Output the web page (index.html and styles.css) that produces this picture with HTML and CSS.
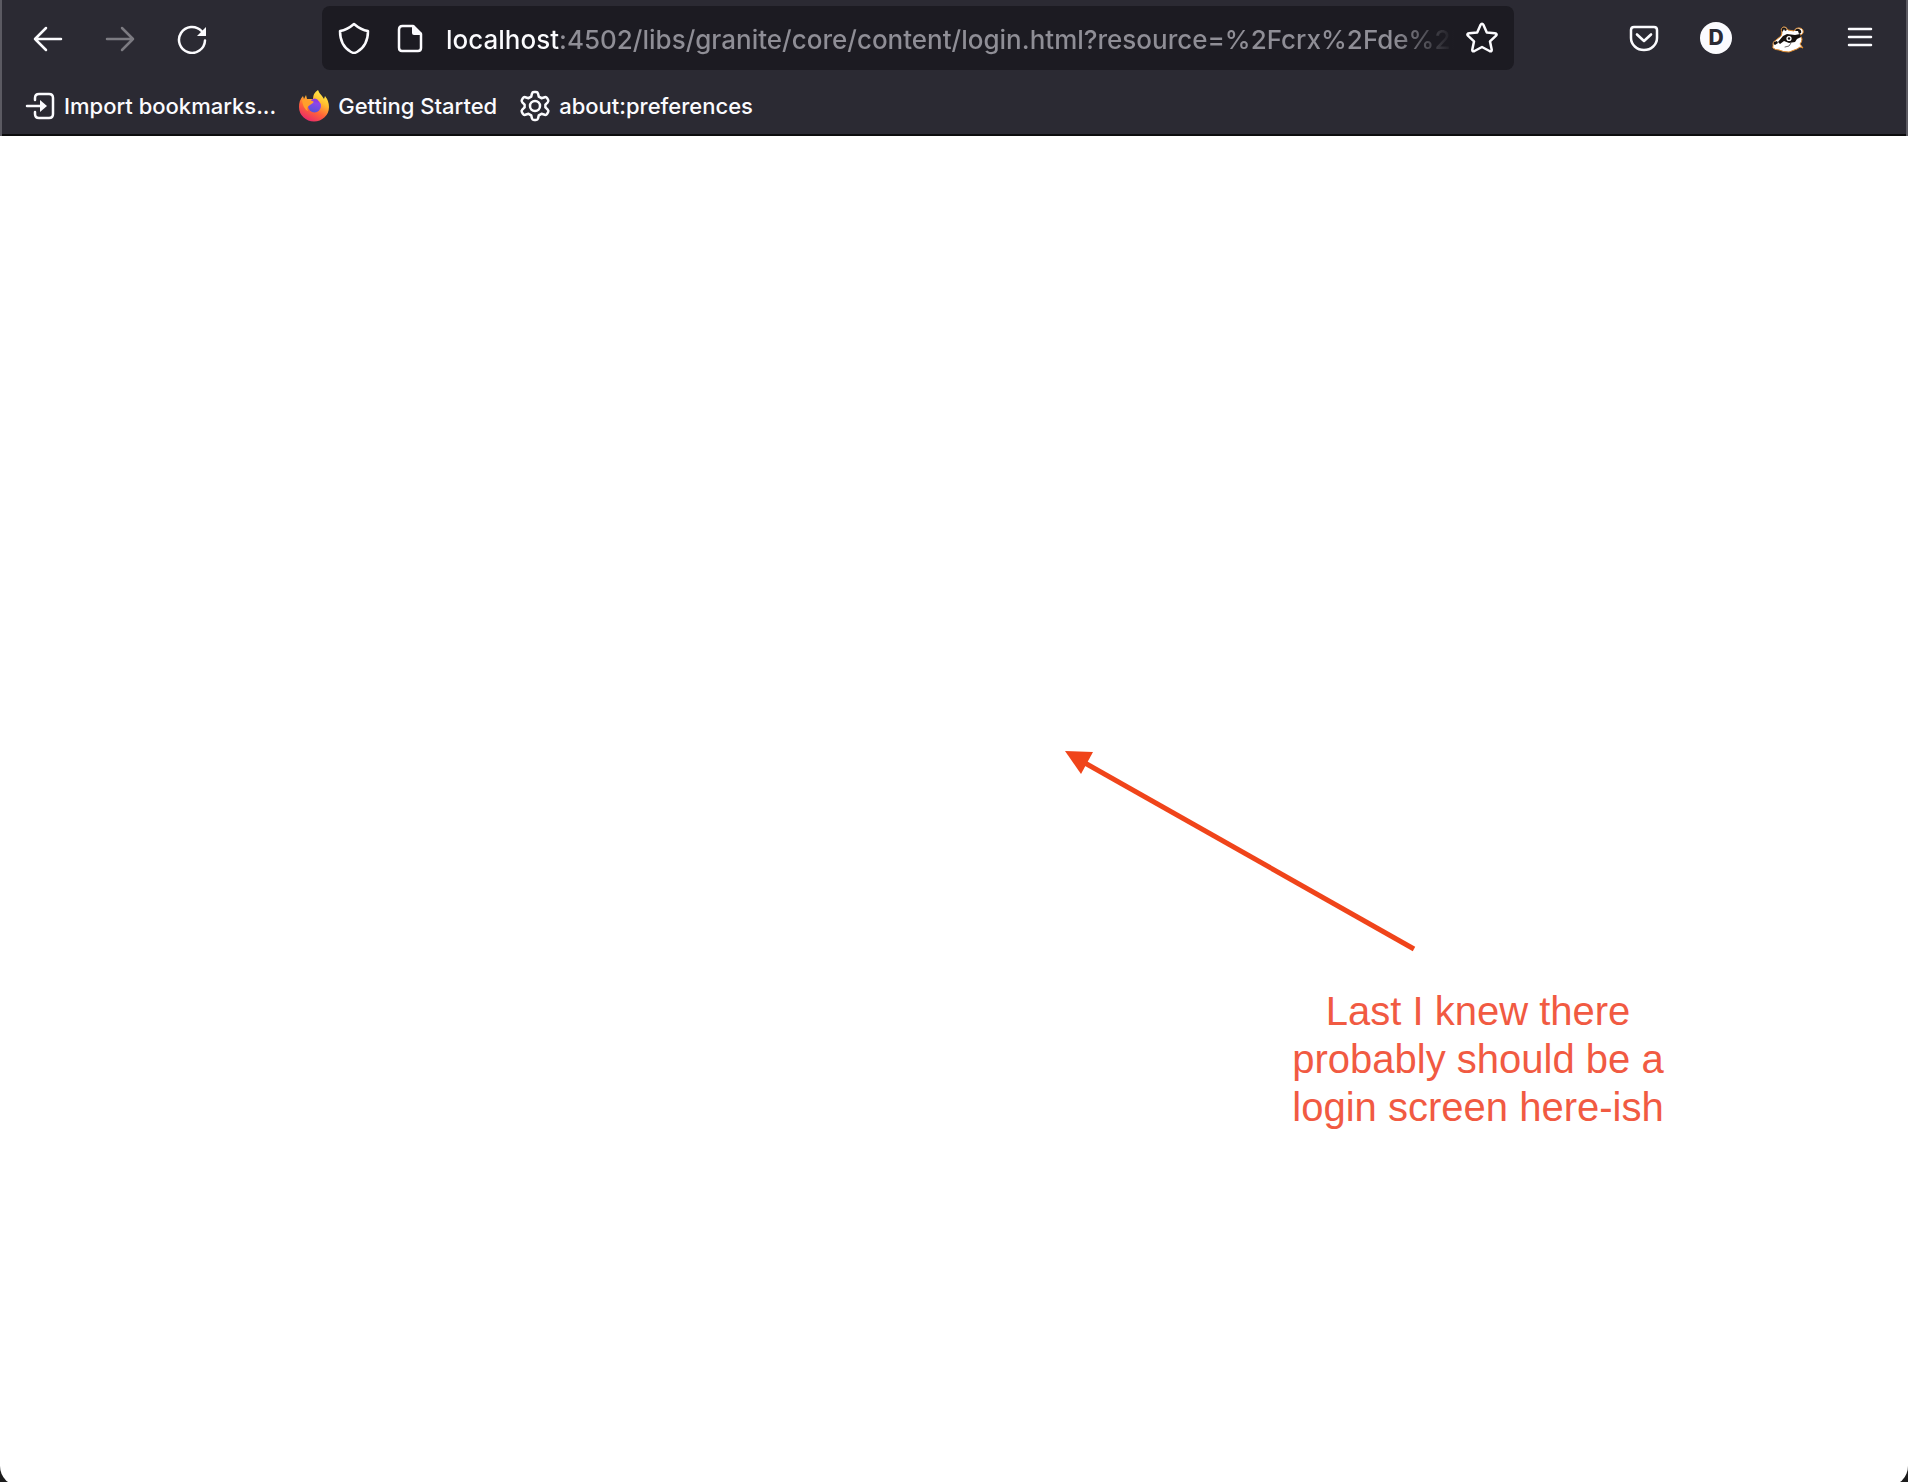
FILE: index.html
```html
<!DOCTYPE html>
<html lang="en">
<head>
<meta charset="utf-8">
<title>localhost:4502</title>
<link rel="stylesheet" href="styles.css">
</head>
<body>
<div class="window">
  <header class="chrome">
    <nav class="toolbar" aria-label="Navigation">
      <button class="tool" aria-label="Back"><svg class="icon" viewBox="0 0 32 32"><path d="M29 17H3M14 6 3 17l11 11"/></svg></button>
      <button class="tool" aria-label="Forward" disabled><svg class="icon" viewBox="0 0 32 32"><path d="M3 17h26M18 6l11 11-11 11"/></svg></button>
      <button class="tool" aria-label="Reload"><svg class="icon" viewBox="0 0 32 32"><path d="M29 18.500a13 13 0 1 1-3.500-9.500"/><path class="solid" d="M30 5v8.500q0 .5-.5.500H21z"/></svg></button>
      <div class="urlbar">
        <svg class="icon" viewBox="0 0 32 32"><path d="M16 2q-7 6-14 7c0 9 4 17 11 21q3 1.800 6 0c7-4 11-12 11-21Q23 8 16 2z"/></svg>
        <svg class="icon" viewBox="0 0 32 32"><path d="M19 4H8.500Q5 4 5 7.500v18Q5 29 8 29h16q3 0 3-3V12"/><path class="solid" d="M18 3h2l8 8v2h-8q-2 0-2-2z"/></svg>
        <input class="address" type="text" aria-label="Address" value="localhost:4502/libs/granite/core/content/login.html?resource=%2Fcrx%2Fde%2F">
        <button class="bookmark" aria-label="Bookmark this page"><svg class="icon" viewBox="0 0 32 32"><path d="M14.400 3.200q1.600-2.800 3.200 0l3.200 7.200 8 .8q3 .5 1 2.700l-5.800 5.500 1.700 8.100q.3 2.700-2.200 1.500L16 25l-7.500 4q-2.500 1.200-2.200-1.500L8 19.400l-5.800-5.500q-2-2.200 1-2.700l8-.8z"/></svg></button>
      </div>
      <button class="tool" aria-label="Save to Pocket"><svg class="icon" viewBox="0 0 32 32"><path d="M6 5h20q3 0 3 3v8a13 12 0 0 1-26 0V8q0-3 3-3z"/><path d="m9 12.500 7 6.500 7-6.500" stroke-width="2.600"/></svg></button>
      <button class="tool" aria-label="Account"><span class="avatar">D</span></button>
      <button class="tool" aria-label="Privacy Badger"><svg class="icon badger" viewBox="0 0 32 32">
        <path fill="#fff" stroke="#e08a2c" stroke-width="1" d="M1 23q-1-3 3-5l5-4 1-3q-2-4 1-6 3-1 5 3l6 1q2-4 6-3 4 1 3 5-1 2-3 2l2 4q0 3-2 5l3 4-3-1-3 2-8 3q-6 0-10-2-4 0-6-2z"/>
        <path fill="#17120f" d="M10 10q-1-4 1.500-4.500Q14 5 15 8l-2 1-1-2-1 2zM23 9q1-3 4-2 3 1 2 4l-2 1-1-3zM2 20l3-1 1 2-3 2q-2-1-1-3zM6 20l5-6 4-2 8 1 5-1 1 3-4 2-2 3-6 1-5-2-4 3z"/>
        <circle cx="17" cy="16.500" r="2.600" fill="#fff"/><circle cx="17" cy="16.500" r="1.200" fill="#17120f"/>
        <path stroke="#6c6867" stroke-width="1" d="m13 25 4-1 2-3"/>
      </svg></button>
      <button class="tool" aria-label="Open menu"><svg class="icon" viewBox="0 0 32 32"><path d="M5 7h22M5 15h22M5 23h22"/></svg></button>
    </nav>
    <nav class="bookmarks" aria-label="Bookmarks">
      <a class="mark" href="#import"><svg class="icon" viewBox="0 0 32 32"><path d="M11 10V8q0-4 4-4h10q4 0 4 4v16q0 4-4 4H15q-4 0-4-4v-2M3 16h16"/><path class="solid" d="m16 10 7 6-7 6z"/></svg>Import bookmarks...</a>
      <a class="mark" href="#start"><svg class="icon firefox" viewBox="0 0 32 32">
        <defs>
          <linearGradient id="flame" x1=".8" y1="0" x2=".3" y2="1"><stop offset="0" stop-color="#fff44f"/><stop offset=".35" stop-color="#ffbd2e"/><stop offset=".65" stop-color="#ff6538"/><stop offset="1" stop-color="#e8266c"/></linearGradient>
          <linearGradient id="globe" x1=".7" y1="0" x2=".4" y2="1"><stop offset="0" stop-color="#a542ed"/><stop offset="1" stop-color="#5353d9"/></linearGradient>
        </defs>
        <path fill="url(#flame)" d="M20 0q1 3 4 6l2 3 1-3q4 5 4 11a15 14.500 0 0 1-30 0Q1 10 5 6l1 3 2-4 1 4 6 0Q15 3 20 0z"/>
        <circle cx="16.500" cy="16" r="6.500" fill="url(#globe)"/>
        <path fill="#ffa02b" d="M4 10q6-2 9 1 2-1 4-1-2 4-5 5-4 2-2 6-5-2-6-11z"/>
        <path fill="#8f3be0" d="M13 10q4-3 7 0l1 3-5-1z"/>
      </svg>Getting Started</a>
      <a class="mark" href="#preferences"><svg class="icon" viewBox="0 0 32 32"><path d="M13 3.500Q13.400 2 15 2h2q1.600 0 2 1.500l.8 3.100 2.700 1.600 3.200-1q1.600-.4 2.400 1l1 1.700q.8 1.400-.4 2.500l-2.300 2.200v2.800l2.300 2.200q1.200 1.100.4 2.500l-1 1.700q-.8 1.400-2.400 1l-3.200-1-2.700 1.600-.8 3.100Q18.600 30 17 30h-2q-1.600 0-2-1.500l-.8-3.100-2.700-1.600-3.200 1q-1.600.4-2.400-1l-1-1.700q-.8-1.400.4-2.500l2.300-2.200v-2.800l-2.300-2.200q-1.200-1.100-.4-2.500l1-1.700q.8-1.400 2.400-1l3.200 1 2.700-1.600z"/><circle cx="16" cy="16" r="5"/></svg>about:preferences</a>
    </nav>
  </header>
  <main class="page">
    <div class="note">
      <svg class="arrow" viewBox="0 0 352 202"><path d="M20 12 349 198" stroke="#f0441a" stroke-width="5"/><path fill="#f0441a" d="M0 0 28 1 16 23z"/></svg>
      <p class="caption">Last I knew there probably should be a login screen here-ish</p>
    </div>
  </main>
</div>
</body>
</html>
```
FILE: styles.css
```css
* { box-sizing: border-box; }

body {
  margin: 0;
  height: 100vh;
  overflow: hidden;
  background: #1c1c1c;
  font-family: Inter, "Liberation Sans", sans-serif;
}

/* The rounded window runs slightly past the bottom of the viewport. */
.window {
  display: flex;
  flex-direction: column;
  height: calc(100vh + 4px);
  border-radius: 0 0 20px 20px;
  overflow: hidden;
  background: #fff;
}

.chrome {
  background: #2b2a33;
  border: solid #5b5a62;
  border-width: 0 2px;
  box-shadow: inset 0 -2px #0c0c0d;
  color: #fbfbfe;
}

.toolbar {
  display: flex;
  align-items: center;
  gap: 8px;
  padding: 6px 14px;
}

button {
  display: grid;
  place-items: center;
  padding: 0;
  border: 0;
  background: none;
  color: inherit;
  font: inherit;
}

.tool {
  flex: none;
  width: 64px;
  height: 64px;
  border-radius: 8px;
}

.tool:disabled { color: #7c7b82; }

.icon {
  flex: none;
  width: 32px;
  height: 32px;
  fill: none;
  stroke: currentColor;
  stroke-width: 2.5;
  stroke-linecap: round;
  stroke-linejoin: round;
}

.icon .solid { fill: currentColor; stroke: none; }

.badger,
.firefox { stroke: none; }

.urlbar {
  flex: 1;
  display: flex;
  align-items: center;
  gap: 24px;
  min-width: 0;
  height: 64px;
  margin: 0 90px;
  padding: 0 16px;
  border-radius: 8px;
  background: #1c1b22;
}

/* Host name bright, the rest of the address grey, fading out at the end. */
.address {
  flex: 1;
  min-width: 0;
  height: 48px;
  margin-left: -4px;
  padding: 2px 0 0;
  border: 0;
  outline: 0;
  color: transparent;
  font: 500 26px Inter, "Liberation Sans", sans-serif;
  background: linear-gradient(to right, #fbfbfe 115px, #8f8e96 115px, #8f8e96 calc(100% - 60px), transparent);
  -webkit-background-clip: text;
  background-clip: text;
}

.bookmark { margin-left: -12px; }

.avatar {
  width: 32px;
  border-radius: 50%;
  background: #fbfbfe;
  color: #2b2a33;
  font-size: 21px;
  font-weight: 800;
  line-height: 32px;
  text-align: center;
}

.bookmarks {
  display: flex;
  align-items: center;
  gap: 22px;
  height: 60px;
  padding: 0 22px;
}

.mark {
  display: flex;
  align-items: center;
  gap: 8px;
  color: inherit;
  font-size: 22px;
  font-weight: 500;
  text-decoration: none;
  white-space: nowrap;
}

.page {
  position: relative;
  flex: 1;
}

.note {
  position: absolute;
  top: 615px;
  left: 1065px;
}

.arrow {
  display: block;
  width: 352px;
  height: 202px;
  fill: none;
}

.caption {
  width: 390px;
  margin: 34px 0 0 218px;
  color: #f15a42;
  font: 40px/48px "Liberation Sans", Arial, sans-serif;
  text-align: center;
}
```
